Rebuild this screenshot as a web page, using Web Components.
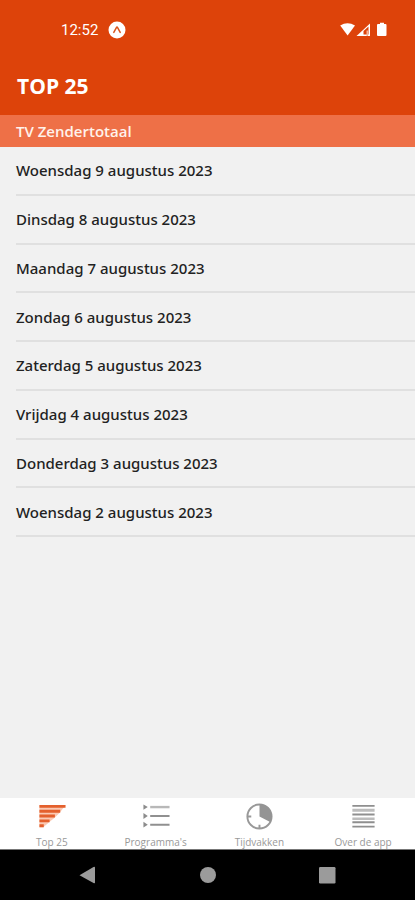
<!DOCTYPE html>
<html lang="nl">
<head>
<meta charset="utf-8">
<meta name="viewport" content="width=device-width, initial-scale=1">
<title>Top 25</title>
<style>
  body { margin: 0; background: #f1f1f1; font-family: "Open Sans", "Noto Sans", sans-serif; }
</style>
</head>
<body>
<ratings-app></ratings-app>
<script>
const define = (name, html) => {
  const template = document.createElement('template');
  template.innerHTML = html;
  customElements.define(name, class extends HTMLElement {
    constructor() {
      super();
      this.attachShadow({ mode: 'open' }).append(template.content.cloneNode(true));
    }
  });
};

define('status-bar', `
  <style>
    :host { display: flex; align-items: center; height: 60px; padding: 0 27px 0 61px; box-sizing: border-box; color: #fff; font: 400 15px/20px Roboto, sans-serif; }
    .expo { margin-left: 10px; }
    .signals { margin-left: auto; }
    svg { display: block; }
  </style>
  <span>12:52</span>
  <svg class="expo" width="18" height="18" viewBox="0 0 18 18" aria-hidden="true">
    <circle cx="9" cy="9" r="8.5" fill="#fff"/>
    <path d="M5.8 11.4 8.4 6.6Q9 5.6 9.6 6.6L12.2 11.4" fill="none" stroke="#d9551d" stroke-width="1.500" stroke-linecap="round"/>
  </svg>
  <svg class="signals" width="48" height="16" viewBox="0 0 48 16" aria-hidden="true">
    <path d="M.2 3.500Q7.500 -1 15 3.500L7.600 13.500Z" fill="#fff"/>
    <path d="M16.500 14 30 1.500V14Z" fill="#fff"/>
    <path d="M23.500 12.500V9L28.500 4.500V12.500Z" fill="#dd430a"/>
    <path d="M26.500 14V8.500H28V14Z" fill="#f3b49b"/>
    <path d="M38 2H40V.8H44V2H45.500Q46.500 2 46.500 3V13Q46.500 14 45.500 14H38Q37 14 37 13V3Q37 2 38 2Z" fill="#fff"/>
  </svg>`);

define('app-header', `
  <style>
    :host { display: block; background: #dd430a; color: #fff; }
    h1 { margin: 0; padding: 11px 17px 14px; font-size: 21px; line-height: 30px; font-weight: 700; }
  </style>
  <status-bar></status-bar>
  <h1><slot></slot></h1>`);

define('section-band', `
  <style>
    :host { display: block; background: #ee7047; color: #fff2eb; }
    h2 { margin: 0; padding: 6px 16px; font-size: 15px; line-height: 20px; font-weight: 600; }
  </style>
  <h2><slot></slot></h2>`);

define('day-list', `
  <style>
    :host { display: grid; grid-auto-rows: 1fr; min-height: 390px; }
  </style>
  <slot></slot>`);

define('day-row', `
  <style>
    :host { display: flex; margin-left: 16px; border-bottom: 2px solid #e0e0e0; }
    button { flex: 1; padding: 0; border: 0; background: none; color: #222; font: 500 15px/20px "Noto Sans", sans-serif; text-align: left; cursor: pointer; }
  </style>
  <button type="button"><slot></slot></button>`);

define('tab-item', `
  <style>
    :host { display: flex; flex: 1; min-width: 0; }
    button { flex: 1; min-width: 0; display: flex; flex-direction: column; align-items: center; gap: 4px; padding: 4px 0 0; border: 0; background: none; color: #999; font: 400 10px/14px "Open Sans", sans-serif; white-space: nowrap; cursor: pointer; }
    ::slotted(svg) { display: block; }
  </style>
  <button type="button"><slot name="icon"></slot><span><slot></slot></span></button>`);

define('tab-bar', `
  <style>
    :host { display: flex; height: 52px; box-sizing: border-box; background: #fff; border-bottom: 1px solid #777; }
  </style>
  <slot></slot>`);

define('system-nav', `
  <style>
    :host { display: flex; align-items: center; justify-content: space-between; height: 50px; padding: 0 76px; background: #000; }
    button { display: block; padding: 0; border: 0; background: none; cursor: pointer; }
    svg { display: block; }
  </style>
  <button type="button" aria-label="Terug"><svg width="24" height="24" viewBox="0 0 24 24"><path d="M3.500 12.200 17.500 4Q19 3.300 19 4.500V19.500Q19 20.700 17.500 20Z" fill="#9b9b9b"/></svg></button>
  <button type="button" aria-label="Start"><svg width="24" height="24" viewBox="0 0 24 24"><circle cx="12" cy="12" r="8" fill="#9b9b9b"/></svg></button>
  <button type="button" aria-label="Recent"><svg width="24" height="24" viewBox="0 0 24 24"><rect x="4" y="4" width="16.500" height="16.500" rx="1.200" fill="#9b9b9b"/></svg></button>`);

define('ratings-app', `
  <style>
    :host { display: flex; flex-direction: column; min-height: 100vh; }
    main { flex: 1; }
  </style>
  <app-header>TOP 25</app-header>
  <main>
    <section-band>TV Zendertotaal</section-band>
    <day-list>
      <day-row>Woensdag 9 augustus 2023</day-row>
      <day-row>Dinsdag 8 augustus 2023</day-row>
      <day-row>Maandag 7 augustus 2023</day-row>
      <day-row>Zondag 6 augustus 2023</day-row>
      <day-row>Zaterdag 5 augustus 2023</day-row>
      <day-row>Vrijdag 4 augustus 2023</day-row>
      <day-row>Donderdag 3 augustus 2023</day-row>
      <day-row>Woensdag 2 augustus 2023</day-row>
    </day-list>
  </main>
  <tab-bar>
    <tab-item>
      <svg slot="icon" width="30" height="30" viewBox="0 0 30 30" aria-hidden="true">
        <path d="M2 3H29L23 11 18 16 12 21 6 26H2Z" fill="#fbc9b3"/>
        <path d="M2 3H29V6H2ZM2 8H23.500V11H2ZM2 13H18V16H2ZM2 18H12.500V21H2ZM2 23H6.500V26H2Z" fill="#e4602d"/>
      </svg>Top 25</tab-item>
    <tab-item>
      <svg slot="icon" width="30" height="30" viewBox="0 0 30 30" aria-hidden="true">
        <path d="M2 2.500 6.500 5.200 2 8ZM2 11.500 6.500 14.500 2 17.500ZM2 20.500 6.500 23.500 2 26.500Z" fill="#8c8c8c"/>
        <path d="M9 4H29V6.500H9Z" fill="#b8b8b8"/>
        <path d="M9 13.500H29V15.500H9ZM9 22.500H29V24.500H9Z" fill="#909090"/>
      </svg>Programma's</tab-item>
    <tab-item>
      <svg slot="icon" width="30" height="30" viewBox="0 0 30 30" aria-hidden="true">
        <circle cx="15.500" cy="15" r="12.500" fill="#fff" stroke="#999" stroke-width="2"/>
        <path d="M15.500 15V2A13 13 0 0 1 27 21Z" fill="#949494"/>
        <path d="M15.500 27V23.500M3 15H7" stroke="#999" stroke-width="2"/>
      </svg>Tijdvakken</tab-item>
    <tab-item>
      <svg slot="icon" width="30" height="30" viewBox="0 0 30 30" aria-hidden="true">
        <path d="M4 3H27V5H4ZM4 12H27V14H4ZM4 20H27V22H4ZM4 24.500H27V26.500H4Z" fill="#8f8f8f"/>
        <path d="M4 7H27V10H4ZM4 16H27V18.500H4Z" fill="#bcbcbc"/>
      </svg>Over de app</tab-item>
  </tab-bar>
  <system-nav></system-nav>`);
</script>
</body>
</html>
